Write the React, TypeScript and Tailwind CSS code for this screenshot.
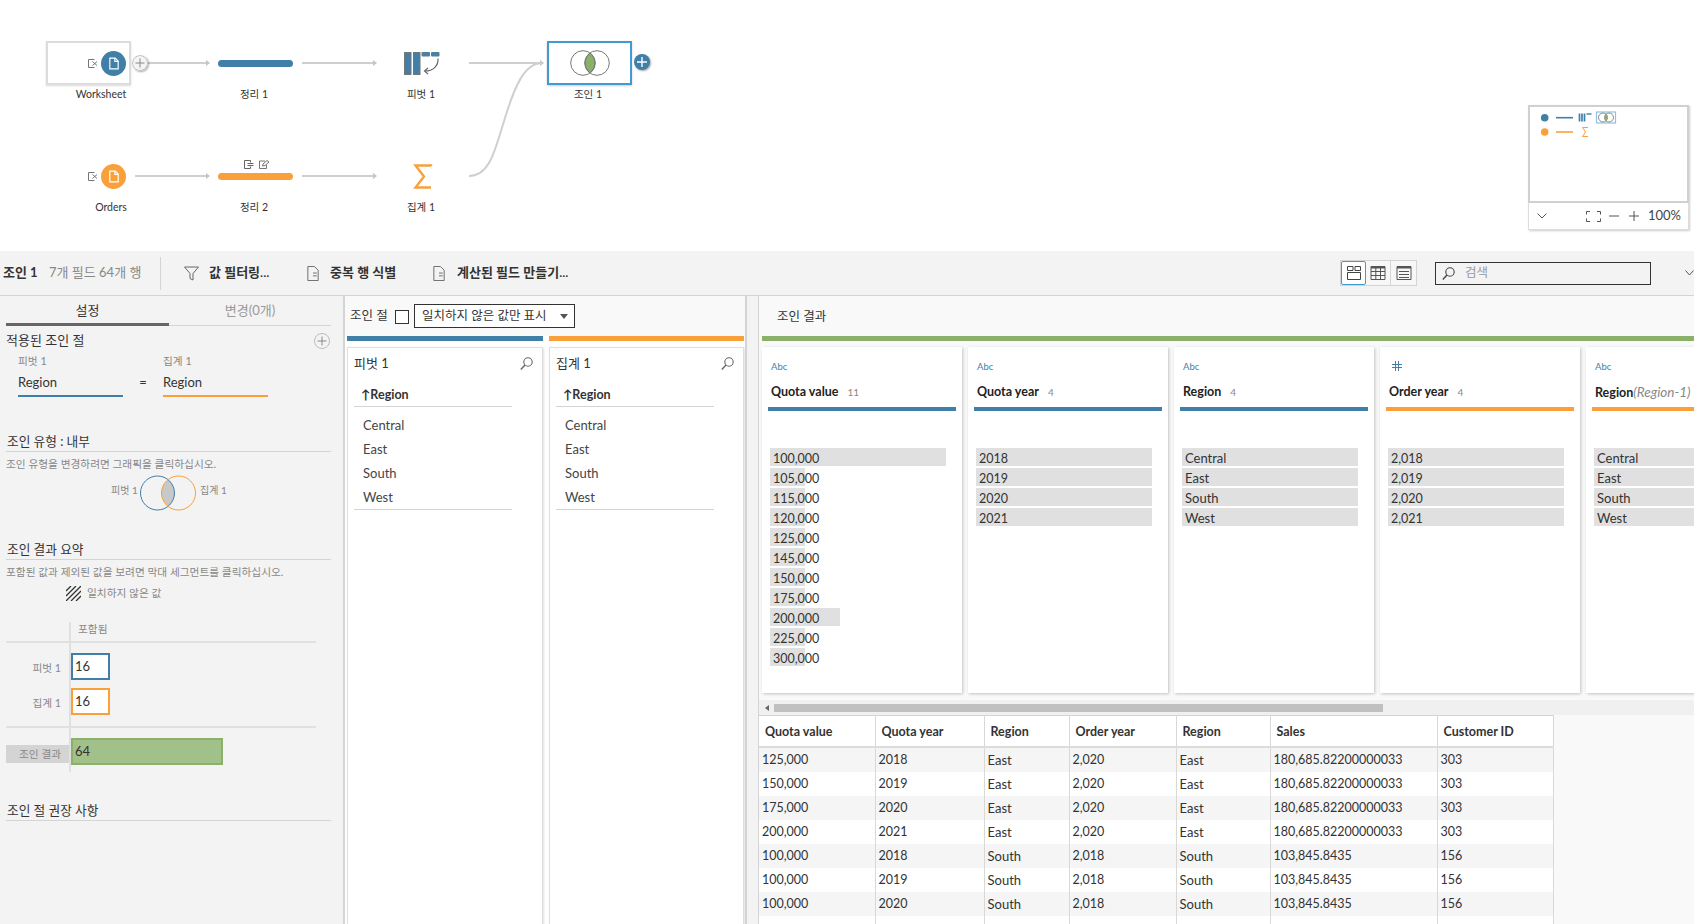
import React from "react";

const BLUE = "#3f7fa8";
const ORANGE = "#f9a03a";

function FileIcon({ className = "", color = "#fff", w = 1.4 }: { className?: string; color?: string; w?: number }) {
  return (
    <svg viewBox="0 0 12 15" className={className} fill="none" stroke={color} strokeWidth={w}>
      <path d="M1 1h6.500L11 4.500V14H1z" />
      <path d="M7 1v4h4" />
    </svg>
  );
}

function SourceMark({ className = "" }: { className?: string }) {
  return (
    <svg viewBox="0 0 10 9" className={className} fill="none" stroke="#777" strokeWidth="1">
      <path d="M6.500.5H.5v8h6" />
      <path d="M4.500 2.500l4.500 4M9 2.500L4.500 6.500" strokeWidth="1" />
    </svg>
  );
}

function DocLines({ className = "" }: { className?: string }) {
  return (
    <svg viewBox="0 0 12 16" className={className} fill="none" stroke="#666" strokeWidth="1">
      <path d="M.5.500h7l4 4v11H.5z" />
      <path d="M6 7.500h4M6 10.500h4" />
    </svg>
  );
}

function SearchGlass({ className = "", color = "#555" }: { className?: string; color?: string }) {
  return (
    <svg viewBox="0 0 13 13" className={className} fill="none" stroke={color} strokeWidth="1.100">
      <circle cx="8" cy="5" r="4.200" />
      <path d="M5 8l-4.200 4.400" strokeWidth="1.400" />
    </svg>
  );
}

function PlusCircle({ className = "" }: { className?: string }) {
  return (
    <svg viewBox="0 0 16 16" className={className} fill="#f4f4f4" stroke="#bbb" strokeWidth="1">
      <circle cx="8" cy="8" r="7.500" />
      <path d="M8 3.500v9M3.500 8h9" stroke="#888" />
    </svg>
  );
}

function Flow() {
  const arrows = [
    [147, 210, 63],
    [302, 377, 63],
    [469, 544, 63],
    [135, 210, 176],
    [302, 377, 176],
  ];
  return (
    <div className="relative h-[251px] bg-white shrink-0">
      <svg className="absolute inset-0" width="1694" height="251" fill="none">
        {arrows.map(([a, b, y]) => (
          <g key={`${a}-${y}`}>
            <path d={`M${a} ${y}H${b - 2}`} stroke="#cfcfcf" strokeWidth="2" />
            <path d={`M${b - 4} ${y - 3}L${b} ${y}L${b - 4} ${y + 3}z`} fill="#c4c4c4" />
          </g>
        ))}
        <path d="M469 176C490 176 495 150 505 118C515 85 525 63 542 63" stroke="#cfcfcf" strokeWidth="2" />
        {/* pivot */}
        <rect x="404.500" y="52.500" width="6.500" height="22" fill={BLUE} stroke="#777" />
        <rect x="413.500" y="52.500" width="6.500" height="22" fill={BLUE} stroke="#777" />
        <rect x="421.500" y="52" width="8.500" height="4.500" rx="1" fill="#4f7f9f" />
        <rect x="431" y="52" width="8.500" height="4.500" rx="1" fill="#4f7f9f" />
        <path d="M438 58.500C438.500 66 433 71 425 71" stroke="#666" strokeWidth="1.200" />
        <path d="M428 68L424.500 71L428 74" stroke="#666" strokeWidth="1.200" />
        {/* sigma */}
        <path d="M431 166V165.500H415.500L424 176.500L415.500 187.500H431" stroke={ORANGE} strokeWidth="2.400" />
      </svg>

      <div className="absolute left-[46px] top-[41px] w-[85px] h-[44px] border-[2.5px] border-[#dcdcdc] bg-white shadow-[0_1px_2px_rgba(0,0,0,0.15)]" />
      <SourceMark className="absolute left-[88px] top-[59px] w-[10px] h-[9px]" />
      <div className="absolute left-[101px] top-[51px] w-[25px] h-[25px] rounded-full flex items-center justify-center bg-[#3f7fa8]">
        <FileIcon className="w-[10px] h-[13px]" />
      </div>
      <PlusCircle className="absolute left-[132px] top-[55px] w-[16px] h-[16px] bg-white rounded-full shadow-[1px_1px_2px_rgba(0,0,0,0.35)]" />

      <div className="absolute left-[218px] top-[60px] w-[75px] h-[7px] rounded-full bg-[#3f7fa8]" />

      <div className="absolute left-[547px] top-[41px] w-[85px] h-[44px] border-[2px] border-[#3f9ad6] bg-white shadow-[0_1px_2px_rgba(0,0,0,0.2)] flex items-center justify-center">
        <svg width="40" height="26" viewBox="0 0 40 26" fill="none" stroke="#777" strokeWidth="1">
          <path d="M20 3.200a12.300 12.300 0 0 1 0 19.600a12.300 12.300 0 0 1 0-19.600z" fill="#8ab06a" />
          <circle cx="13" cy="13" r="12.300" />
          <circle cx="27" cy="13" r="12.300" />
        </svg>
      </div>
      <div className="absolute left-[634px] top-[54px] w-[16px] h-[16px] rounded-full bg-[#3f7fa8] shadow-[1px_1px_2px_rgba(0,0,0,0.35)] flex items-center justify-center">
        <svg width="10" height="10" viewBox="0 0 10 10" stroke="#fff" strokeWidth="1.400">
          <path d="M5 0v10M0 5h10" />
        </svg>
      </div>

      <SourceMark className="absolute left-[88px] top-[172px] w-[10px] h-[9px]" />
      <div className="absolute left-[101px] top-[164px] w-[25px] h-[25px] rounded-full flex items-center justify-center bg-[#f9a03a]">
        <FileIcon className="w-[10px] h-[13px]" />
      </div>

      <svg className="absolute left-[244px] top-[160px]" width="10" height="9" viewBox="0 0 10 9" fill="none" stroke="#666" strokeWidth="1">
        <path d="M6.500 2.500V.500H.5v8h6V6.500" />
        <path d="M3.500 3.500h6M3.500 5.500h6" />
      </svg>
      <svg className="absolute left-[259px] top-[160px]" width="11" height="9" viewBox="0 0 11 9" fill="none" stroke="#666" strokeWidth="0.900">
        <path d="M6 1H.5v7.500h7V5" />
        <path d="M3.500 6l.5-2L8 .5l2 1.500-4 3.500z" />
      </svg>
      <div className="absolute left-[218px] top-[173px] w-[75px] h-[7px] rounded-full bg-[#f9a03a]" />

      {[
        ["Worksheet", 101, 94],
        ["정리 1", 254, 94],
        ["피벗 1", 421, 94],
        ["조인 1", 588, 94],
        ["Orders", 111, 207],
        ["정리 2", 254, 207],
        ["집계 1", 421, 207],
      ].map(([t, x, y]) => (
        <div
          key={t as string}
          className="absolute -translate-x-1/2 -translate-y-1/2 text-[10.500px] leading-[14px] text-[#333] whitespace-nowrap"
          style={{ left: x as number, top: y as number }}
        >
          {t}
        </div>
      ))}

      <div className="absolute left-[1528px] top-[105px] w-[161px] h-[125px] bg-white flex flex-col shadow-[1px_1px_2px_rgba(0,0,0,0.2)]">
        <div className="h-[98px] border-2 border-[#d0d0d0] shrink-0">
          <svg width="157" height="94" viewBox="0 0 157 94" fill="none">
            <circle cx="14.700" cy="10.700" r="3.800" fill={BLUE} />
            <path d="M26 10.700h17" stroke={BLUE} strokeWidth="1.600" />
            <path d="M49.500 6.500v8M52 6.500v8M54.500 6.500v8" stroke={BLUE} strokeWidth="1.700" />
            <path d="M56.500 7h5" stroke={BLUE} strokeWidth="1.400" />
            <rect x="66.500" y="5" width="19" height="11" fill="#fff" stroke="#8fc2e6" strokeWidth="1.200" />
            <circle cx="73" cy="10.500" r="4.500" stroke="#888" />
            <circle cx="79" cy="10.500" r="4.500" stroke="#888" />
            <path d="M76 7v7" stroke="#8ab06a" strokeWidth="2" />
            <circle cx="14.700" cy="25" r="3.800" fill={ORANGE} />
            <path d="M26 25h17" stroke={ORANGE} strokeWidth="1.600" />
            <path d="M58 20.500h-5.500l3 4.500-3 4.500H58" stroke={ORANGE} strokeWidth="1" />
          </svg>
        </div>
        <div className="h-[27px] flex items-center border border-t-0 border-[#dddddd] pl-[8px] pr-[7px] text-[13px] text-[#444]">
          <svg width="10" height="6" viewBox="0 0 10 6" fill="none" stroke="#555">
            <path d="M.5.500L5 5l4.500-4.500" />
          </svg>
          <svg className="ml-[39px]" width="15" height="11" viewBox="0 0 15 11" fill="none" stroke="#555">
            <path d="M4 .5H.5v3M11 .5h3.500v3M4 10.500H.5v-3M11 10.500h3.500v-3" />
          </svg>
          <svg className="ml-[8px]" width="10" height="2" viewBox="0 0 10 2" stroke="#555">
            <path d="M0 1h10" />
          </svg>
          <svg className="ml-[10px]" width="10" height="10" viewBox="0 0 10 10" stroke="#555">
            <path d="M0 5h10M5 0v10" />
          </svg>
          <span className="ml-auto">100%</span>
        </div>
      </div>
    </div>
  );
}

function Toolbar() {
  return (
    <div className="h-[45px] shrink-0 bg-[#f3f3f3] border-b border-[#d4d4d4] flex items-center text-[13px] text-[#333]">
      <span className="ml-[3px] font-bold w-[46px] whitespace-nowrap">조인 1</span>
      <span className="text-[#888] w-[111px] whitespace-nowrap">7개 필드 64개 행</span>
      <div className="w-px h-[33px] bg-[#d4d4d4]" />
      <svg className="ml-[23px]" width="15" height="15" viewBox="0 0 15 15" fill="none" stroke="#666">
        <path d="M.5 1h14L9 7.500V14l-3-1.500v-5z" />
      </svg>
      <span className="ml-[10px] font-semibold w-[61px] whitespace-nowrap">값 필터링...</span>
      <DocLines className="ml-[37px] w-[12px] h-[15px]" />
      <span className="ml-[11px] font-semibold w-[65px] whitespace-nowrap">중복 행 식별</span>
      <DocLines className="ml-[38px] w-[12px] h-[15px]" />
      <span className="ml-[12px] font-semibold whitespace-nowrap">계산된 필드 만들기...</span>

      <div className="ml-auto h-[26px] w-[77px] flex border border-[#d4d4d4] bg-[#f7f7f7]">
        <div className="w-[25px] border border-[#3f9ad6] rounded-[2px] bg-white flex items-center justify-center">
          <svg width="16" height="16" viewBox="0 0 16 16" fill="none" stroke="#444">
            <path d="M1.500 1.500h5.500v4H1.500zM9 1.500h5.500v4H9zM1.500 7.500h13v7h-13z" />
          </svg>
        </div>
        <div className="w-[25px] border-r border-[#d4d4d4] flex items-center justify-center">
          <svg width="16" height="16" viewBox="0 0 16 16" fill="none" stroke="#555">
            <path d="M1 1.500h14v13H1z" />
            <path d="M1 2.500h14" strokeWidth="2" />
            <path d="M1 6.500h14M1 10.500h14M5.800 3v11.500M10.500 3v11.500" />
          </svg>
        </div>
        <div className="w-[25px] flex items-center justify-center">
          <svg width="16" height="16" viewBox="0 0 16 16" fill="none" stroke="#555">
            <path d="M1 1.500h14v13H1z" />
            <path d="M1 2.500h14" strokeWidth="2" />
            <path d="M3 6.500h10M3 9.500h10M3 12.500h10" />
          </svg>
        </div>
      </div>
      <div className="ml-[18px] w-[216px] h-[23px] border border-[#333] flex items-center pl-[6px]">
        <SearchGlass className="w-[13px] h-[13px]" color="#444" />
        <span className="ml-[10px] text-[#999] text-[12.500px]">검색</span>
      </div>
      <svg className="ml-[34px] shrink-0" width="9" height="6" viewBox="0 0 9 6" fill="none" stroke="#555">
        <path d="M.5.500L4.500 5l4-4.500" />
      </svg>
    </div>
  );
}

function Heading({ children }: { children: React.ReactNode }) {
  return <div className="h-[19px] border-b border-[#d4d4d4] text-[12.700px] leading-[16px] pl-px text-[#333] whitespace-nowrap">{children}</div>;
}

function LeftPanel() {
  return (
    <div className="w-[345px] shrink-0 bg-[#f3f3f3] border-r-2 border-[#d4d4d4] pl-[6px] pr-[12px] text-[#333] overflow-hidden">
      <div className="grid grid-cols-[163px_162px] h-[30px] text-[13px] text-center">
        <div className="border-b-[3px] border-[#666] leading-[29px] h-[30px]">설정</div>
        <div className="border-b border-[#d4d4d4] text-[#999] leading-[29px] h-[30px]">변경(0개)</div>
      </div>
      <div className="h-[30px] flex items-center justify-between text-[13px] pr-[1px]">
        <span>적용된 조인 절</span>
        <PlusCircle className="w-[16px] h-[16px]" />
      </div>
      <div className="grid grid-cols-[105px_40px_105px] ml-[12px] text-[#888] text-[10.700px] leading-[10px] h-[12px]">
        <span>피벗 1</span>
        <span />
        <span>집계 1</span>
      </div>
      <div className="grid grid-cols-[105px_40px_105px] ml-[12px] text-[13px] h-[29px]">
        <div className="border-b-2 border-[#3f7fa8] h-[29px] pt-[2px] leading-[24px]">Region</div>
        <div className="text-center h-[29px] pt-[2px] leading-[24px]">=</div>
        <div className="border-b-2 border-[#f9a03a] h-[29px] pt-[2px] leading-[24px]">Region</div>
      </div>

      <div className="mt-[36px]">
        <Heading>
          조인 유형 : <span>내부</span>
        </Heading>
      </div>
      <div className="h-[24px] text-[10.700px] leading-[23px] text-[#888] whitespace-nowrap">조인 유형을 변경하려면 그래픽을 클릭하십시오.</div>
      <div className="h-[34px] flex items-center text-[10px] text-[#888]">
        <span className="ml-[105px] w-[29px] -mt-[5px] whitespace-nowrap">피벗 1</span>
        <svg width="57" height="36" viewBox="0 0 57 36" fill="none" className="shrink-0">
          <path d="M28 4.500a17 17 0 0 1 0 27a17 17 0 0 1 0-27z" fill="#c8c8c8" />
          <circle cx="17.500" cy="18" r="17" stroke={BLUE} />
          <circle cx="38.500" cy="18" r="17" stroke={ORANGE} />
        </svg>
        <span className="ml-[3px] -mt-[5px] whitespace-nowrap">집계 1</span>
      </div>

      <div className="mt-[31px]">
        <Heading>조인 결과 요약</Heading>
      </div>
      <div className="h-[24px] text-[10.700px] leading-[23px] text-[#888] whitespace-nowrap">포함된 값과 제외된 값을 보려면 막대 세그먼트를 클릭하십시오.</div>
      <div className="h-[18px] flex items-center text-[10.700px] text-[#888]">
        <svg className="ml-[60px]" width="15" height="15" viewBox="0 0 15 15" stroke="#333" strokeWidth="1.300">
          <path d="M0 5L5 0M0 10L10 0M0 15L15 0M5 15L15 5M10 15l5-5" />
        </svg>
        <span className="ml-[6px]">일치하지 않은 값</span>
      </div>

      <div className="relative mt-[20px] w-[310px] h-[150px]">
        <div className="absolute left-[63px] top-0 w-[2px] h-[150px] bg-[#e0e0e0]" />
        <div className="h-[21px] border-b-2 border-[#e0e0e0] pl-[72px] text-[10.700px] leading-[14px] text-[#888]">포함됨</div>
        <div className="mt-[10px] flex items-center h-[27px]">
          <span className="w-[55px] text-right text-[10.700px] text-[#888] pt-[4px]">피벗 1</span>
          <div className="ml-[10px] w-[39px] h-[27px] border-2 border-[#3f7fa8] bg-white pl-[2px] text-[13px] leading-[23px]">16</div>
        </div>
        <div className="mt-[8px] flex items-center h-[27px]">
          <span className="w-[55px] text-right text-[10.700px] text-[#888] pt-[4px]">집계 1</span>
          <div className="ml-[10px] w-[39px] h-[27px] border-2 border-[#f9a03a] bg-white pl-[2px] text-[13px] leading-[23px]">16</div>
        </div>
        <div className="mt-[11px] h-[2px] bg-[#e0e0e0]" />
        <div className="mt-[10px] flex h-[27px]">
          <div className="mt-[7px] w-[63px] h-[18px] bg-[#d4d4d4] pl-[13px] text-[10.700px] leading-[18px] text-[#888] whitespace-nowrap">조인 결과</div>
          <div className="ml-[2px] w-[152px] h-[27px] border-2 border-[#8ab06a] bg-[#a2c08a] pl-[2px] text-[13px] leading-[22px]">64</div>
        </div>
      </div>

      <div className="mt-[30px]">
        <Heading>조인 절 권장 사항</Heading>
      </div>
    </div>
  );
}

function ClauseCard({ title }: { title: string }) {
  return (
    <div className="h-[600px] bg-white border border-[#dedede] shadow-[1px_1px_2px_rgba(0,0,0,0.12)] pl-[6px]">
      <div className="h-[31px] pr-[9px] flex items-center justify-between text-[13px] text-[#333]">
        <span>{title}</span>
        <SearchGlass className="w-[13px] h-[13px]" color="#666" />
      </div>
      <div className="w-[158px] h-[28px] border-b border-[#d4d4d4] pl-[7px] text-[12.500px] font-bold leading-[31px] text-[#333]">
        ↑Region
      </div>
      <div className="w-[158px] h-[103px] border-b border-[#d4d4d4] pl-[9px] pt-[7px] text-[13px] text-[#444]">
        {["Central", "East", "South", "West"].map((v) => (
          <div key={v} className="h-[24px] leading-[22px]">
            {v}
          </div>
        ))}
      </div>
    </div>
  );
}

function MiddlePanel() {
  return (
    <div className="w-[402px] shrink-0 bg-white border-r-2 border-[#d4d4d4] pl-[2px] pr-[1px] overflow-hidden">
      <div className="h-[40px] flex items-center bg-[#f9f9f9] -ml-[2px] -mr-[1px] pl-[5px] text-[12.500px] text-[#333]">
        <span className="w-[45px] whitespace-nowrap">조인 절</span>
        <div className="w-[14px] h-[14px] border border-[#333] bg-white mt-[2px]" />
        <div className="ml-[5px] w-[161px] h-[24px] border border-[#333] pl-[7px] pr-[6px] flex items-center justify-between bg-white">
          <span className="whitespace-nowrap">일치하지 않은 값만 표시</span>
          <svg width="8" height="5" viewBox="0 0 8 5" fill="#555" className="shrink-0">
            <path d="M0 0h8L4 5z" />
          </svg>
        </div>
      </div>
      <div className="grid grid-cols-[196px_195px] gap-x-[6px] h-[5px]">
        <div className="bg-[#3f7fa8]" />
        <div className="bg-[#f9a03a]" />
      </div>
      <div className="mt-[6px] grid grid-cols-[196px_195px] gap-x-[6px]">
        <ClauseCard title="피벗 1" />
        <ClauseCard title="집계 1" />
      </div>
    </div>
  );
}

const quotaValues: [string, string][] = [
  ["100,000", "w-[176px]"],
  ["105,000", "w-[35px]"],
  ["115,000", "w-[35px]"],
  ["120,000", "w-[35px]"],
  ["125,000", "w-[35px]"],
  ["145,000", "w-[35px]"],
  ["150,000", "w-[35px]"],
  ["175,000", "w-[35px]"],
  ["200,000", "w-[70px]"],
  ["225,000", "w-[35px]"],
  ["300,000", "w-[35px]"],
];

const full = (a: string[]): [string, string][] => a.map((v) => [v, "w-[176px]"]);
const isNum = (v: string) => /\d/.test(v);

const profiles: { kind: string; name: React.ReactNode; count?: string; bar: string; rows: [string, string][] }[] = [
  { kind: "Abc", name: "Quota value", count: "11", bar: "bg-[#3f7fa8]", rows: quotaValues },
  { kind: "Abc", name: "Quota year", count: "4", bar: "bg-[#3f7fa8]", rows: full(["2018", "2019", "2020", "2021"]) },
  { kind: "Abc", name: "Region", count: "4", bar: "bg-[#3f7fa8]", rows: full(["Central", "East", "South", "West"]) },
  { kind: "#", name: "Order year", count: "4", bar: "bg-[#f9a03a]", rows: full(["2,018", "2,019", "2,020", "2,021"]) },
  {
    kind: "Abc",
    name: (
      <>
        Region<span className="font-normal italic text-[#888] text-[13.500px]">(Region-1)</span>
      </>
    ),
    bar: "bg-[#f9a03a]",
    rows: full(["Central", "East", "South", "West"]),
  },
];

function ProfileCard({ p }: { p: (typeof profiles)[number] }) {
  return (
    <div className="w-[200px] h-[346px] shrink-0 bg-white shadow-[1px_1px_3px_rgba(0,0,0,0.22)] pl-[6px] pt-[14px]">
      {p.kind === "#" ? (
        <svg className="ml-[6px]" width="10" height="12" viewBox="0 0 10 12" stroke="#3f7fa8">
          <path d="M3.500 0v10M6.500 0v10M0 3.500h10M0 6.500h10" />
        </svg>
      ) : (
        <div className="ml-[3px] h-[12px] leading-[12px] text-[#3f7fa8] text-[9.500px]">{p.kind}</div>
      )}
      <div className="ml-[3px] mt-[10px] h-[16px] leading-[18px] flex items-baseline text-[12.500px] font-bold text-[#222] whitespace-nowrap">
        <span>{p.name}</span>
        {p.count && <span className="ml-[9px] text-[10px] font-normal text-[#888]">{p.count}</span>}
      </div>
      <div className={`mt-[8px] w-[188px] h-[4px] ${p.bar}`} />
      <div className="mt-[37px] ml-[2px] flex flex-col gap-[2px]">
        {p.rows.map(([v, w]) => (
          <div
            key={v}
            className={`h-[18px] ${w} ${isNum(v) ? "text-[12.500px] leading-[21px]" : "text-[13px] leading-[20px]"} bg-[#e0e0e0] pl-[3px] text-[#333] whitespace-nowrap`}
          >
            {v}
          </div>
        ))}
      </div>
    </div>
  );
}

const headers = ["Quota value", "Quota year", "Region", "Order year", "Region", "Sales", "Customer ID"];
const rows = [
  ["125,000", "2018", "East", "2,020", "East", "180,685.82200000033", "303"],
  ["150,000", "2019", "East", "2,020", "East", "180,685.82200000033", "303"],
  ["175,000", "2020", "East", "2,020", "East", "180,685.82200000033", "303"],
  ["200,000", "2021", "East", "2,020", "East", "180,685.82200000033", "303"],
  ["100,000", "2018", "South", "2,018", "South", "103,845.8435", "156"],
  ["100,000", "2019", "South", "2,018", "South", "103,845.8435", "156"],
  ["100,000", "2020", "South", "2,018", "South", "103,845.8435", "156"],
  ["", "", "", "", "", "", ""],
];

function ResultPanel() {
  return (
    <div className="flex-1 min-w-0 bg-[#f9f9f9] border-l border-[#d4d4d4] overflow-hidden">
      <div className="h-[40px] pl-[18px] text-[12.500px] leading-[42px] text-[#333]">조인 결과</div>
      <div className="ml-[3px] h-[5px] bg-[#8ab06a]" />
      <div className="ml-[3px] mt-[6px] flex gap-[6px]">
        {profiles.map((p, i) => (
          <ProfileCard key={i} p={p} />
        ))}
      </div>
      <div className="mt-[7px] h-[15px] bg-[#f0f0f0] flex items-center pl-[6px]">
        <svg width="4" height="6" viewBox="0 0 4 6" fill="#666">
          <path d="M4 0v6L0 3z" />
        </svg>
        <div className="ml-[5px] w-[609px] h-[8px] bg-[#c0c0c0]" />
      </div>
      <table className="table-fixed w-[794px] border-collapse bg-white border-t border-[#d4d4d4]">
        <colgroup>
          <col className="w-[116px]" />
          <col className="w-[109px]" />
          <col className="w-[85px]" />
          <col className="w-[107px]" />
          <col className="w-[94px]" />
          <col className="w-[167px]" />
          <col className="w-[116px]" />
        </colgroup>
        <thead>
          <tr className="h-[31px] border-b-2 border-[#dcdcdc]">
            {headers.map((h, i) => (
              <th key={i} className="border-r border-[#d8d8d8] pl-[6px] pt-[2px] text-left text-[12.500px] leading-[18px] font-bold text-[#333]">
                {h}
              </th>
            ))}
          </tr>
        </thead>
        <tbody>
          {rows.map((r, i) => (
            <tr key={i} className={`h-[24px] ${i % 2 === 0 && i < 7 ? "bg-[#f5f5f5]" : "bg-white"}`}>
              {r.map((c, j) => (
                <td
                  key={j}
                  className={`border-r border-[#d8d8d8] pl-[3px] ${isNum(c) ? "text-[12.500px]" : "text-[13px]"} leading-[24px] text-[#333] whitespace-nowrap`}
                >
                  {c}
                </td>
              ))}
            </tr>
          ))}
        </tbody>
      </table>
    </div>
  );
}

export default function App() {
  return (
    <div className="w-[1694px] h-[924px] overflow-hidden flex flex-col bg-white [font-family:Lato,'Noto_Sans_CJK_KR',sans-serif]">
      <Flow />
      <Toolbar />
      <div className="flex-1 min-h-0 flex bg-[#f3f3f3]">
        <LeftPanel />
        <MiddlePanel />
        <div className="w-[11px] shrink-0" />
        <ResultPanel />
      </div>
    </div>
  );
}
